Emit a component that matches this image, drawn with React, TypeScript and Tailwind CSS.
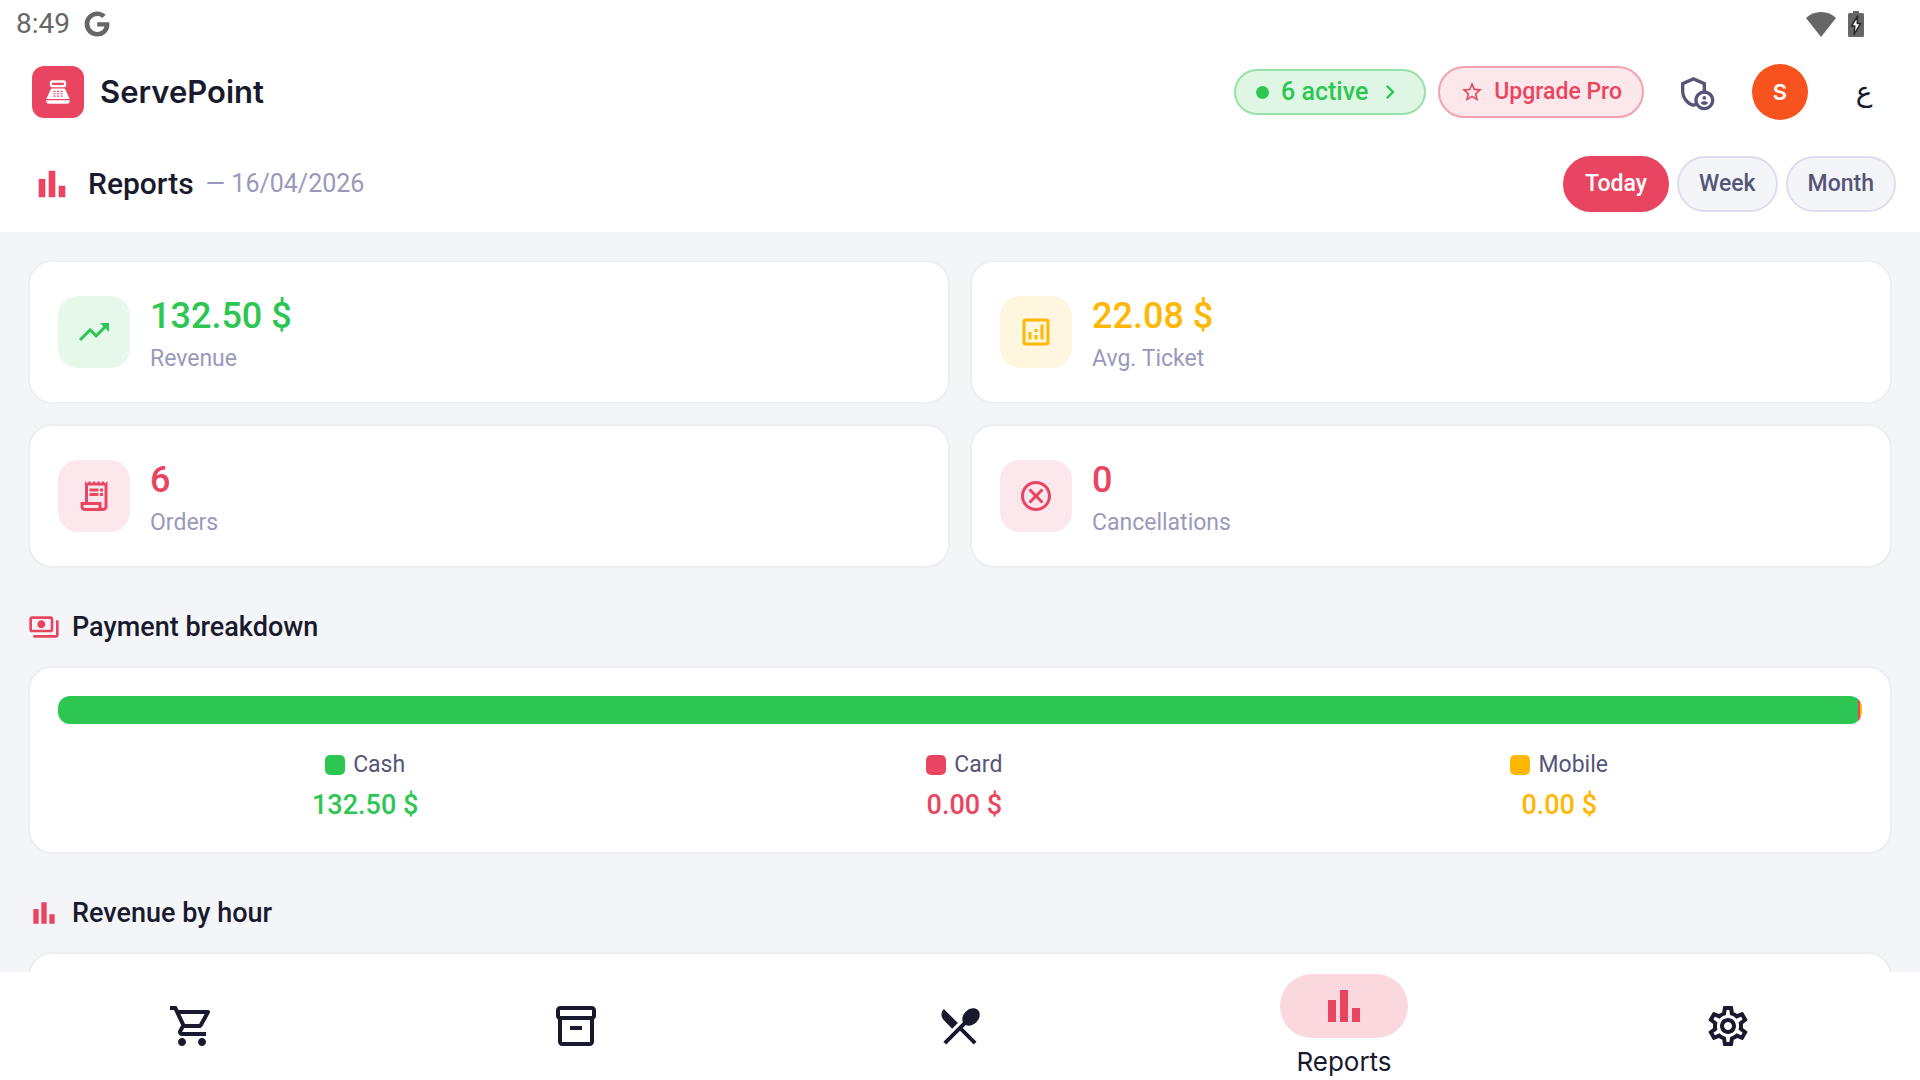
import React, { useState } from "react";
import { FaGoogle } from "react-icons/fa";
import {
  MdBarChart,
  MdChevronRight,
  MdOutlineAdminPanelSettings,
  MdOutlineAnalytics,
  MdOutlineCancel,
  MdOutlineInventory2,
  MdOutlinePayments,
  MdOutlineReceiptLong,
  MdOutlineSettings,
  MdOutlineShoppingCart,
  MdPointOfSale,
  MdRestaurantMenu,
  MdStarOutline,
  MdTrendingUp,
} from "react-icons/md";
import type { IconType } from "react-icons";
import clsx from "clsx";

const stats = [
  {
    label: "Revenue",
    value: "132.50 $",
    icon: MdTrendingUp,
    text: "text-[#2dc653]",
    tile: "bg-[#e6f8ea]",
  },
  {
    label: "Avg. Ticket",
    value: "22.08 $",
    icon: MdOutlineAnalytics,
    text: "text-[#ffb703]",
    tile: "bg-[#fff6e0]",
  },
  {
    label: "Orders",
    value: "6",
    icon: MdOutlineReceiptLong,
    text: "text-[#e94560]",
    tile: "bg-[#fce8ec]",
  },
  {
    label: "Cancellations",
    value: "0",
    icon: MdOutlineCancel,
    text: "text-[#e94560]",
    tile: "bg-[#fce8ec]",
  },
];

// an empty method still gets a sliver of the bar
const payments = [
  { label: "Cash", amount: 132.5, text: "text-[#2dc653]", bg: "bg-[#2dc653]" },
  { label: "Card", amount: 0, text: "text-[#e94560]", bg: "bg-[#e94560]" },
  { label: "Mobile", amount: 0, text: "text-[#ffb703]", bg: "bg-[#ffb703]" },
];

const periods = ["Today", "Week", "Month"];

const tabs = [
  { label: "Sales", icon: MdOutlineShoppingCart },
  { label: "Products", icon: MdOutlineInventory2 },
  { label: "Kitchen", icon: MdRestaurantMenu },
  { label: "Reports", icon: MdBarChart },
  { label: "Settings", icon: MdOutlineSettings },
];

export default function App() {
  return (
    <div className="flex h-screen flex-col bg-white font-[Roboto,sans-serif] text-[#1a1a2e]">
      <StatusBar />
      <Header />
      <ReportsBar />
      <main className="min-h-0 flex-1 overflow-hidden bg-[#f4f5f9] px-7 pt-7">
        <div className="grid grid-cols-2 gap-5">
          {stats.map((stat) => (
            <StatCard key={stat.label} {...stat} />
          ))}
        </div>
        <SectionTitle icon={MdOutlinePayments} title="Payment breakdown" />
        <PaymentCard />
        <SectionTitle icon={MdBarChart} title="Revenue by hour" />
        <Card className="h-80" />
      </main>
      <BottomNav />
    </div>
  );
}

function StatusBar() {
  return (
    <div className="flex h-12 shrink-0 items-center justify-between pr-14 pl-4 text-[#666666]">
      <div className="flex items-center gap-3.5">
        <span className="text-[28px] leading-8">8:49</span>
        <FaGoogle className="size-[26px]" />
      </div>
      <div className="flex items-center gap-3">
        <svg viewBox="0 0 30 26" className="h-[26px] w-[30px]" fill="currentColor">
          <path d="M15 26 0 7C4 3 9 1 15 1s11 2 15 6z" />
        </svg>
        <svg viewBox="0 0 16 26" className="h-[26px] w-4">
          <path
            d="M5 0h6v2h3.500q1.500 0 1.500 1.500v21q0 1.500-1.500 1.500h-13Q0 26 0 24.500v-21Q0 2 1.500 2H5z"
            fill="#666666"
          />
          <path
            d="M9.500 5 3.500 15h3.300L6 23.500 12.700 12.500H9.300z"
            fill="#ffffff"
            stroke="#2b2b2b"
            strokeWidth="1.600"
            strokeLinejoin="round"
          />
        </svg>
      </div>
    </div>
  );
}

function Header() {
  return (
    <header className="flex h-[88px] shrink-0 items-center justify-between px-8">
      <div className="flex items-center gap-4">
        <div className="flex size-[52px] items-center justify-center rounded-xl bg-[#e94560] text-white">
          <MdPointOfSale className="size-7" />
        </div>
        <h1 className="font-[Inter,sans-serif] text-[31px] leading-9 font-semibold">
          ServePoint
        </h1>
      </div>
      <div className="flex items-center">
        <button className="flex h-[46px] items-center rounded-full border-2 border-[#96e2a9] bg-[#e0f6e5] px-5 text-[#2dc653]">
          <span className="mr-3 size-[13px] rounded-full bg-[#2dc653]" />
          <span className="text-[25px] leading-8 font-medium">6 active</span>
          <MdChevronRight className="ml-2 size-7" />
        </button>
        <button className="ml-3 flex h-[52px] items-center gap-2.5 rounded-full border-2 border-[#f4a2b0] bg-[#fce7eb] px-5 text-[#e94560]">
          <MdStarOutline className="size-6" />
          <span className="text-[23px] leading-8 font-medium">Upgrade Pro</span>
        </button>
        <button
          aria-label="Admin panel"
          className="ml-8 flex size-10 items-center justify-center text-[#555577]"
        >
          <MdOutlineAdminPanelSettings className="size-10" />
        </button>
        <button className="ml-9 size-14 rounded-full bg-[#f8521f] font-[Inter,sans-serif] text-[22px] font-semibold text-white">
          S
        </button>
        <button
          lang="ar"
          className="ml-8 w-12 font-['DejaVu_Sans',sans-serif] text-[28px] leading-8"
        >
          ع
        </button>
      </div>
    </header>
  );
}

function ReportsBar() {
  const [period, setPeriod] = useState("Today");

  return (
    <div className="flex h-24 shrink-0 items-center justify-between pr-6 pl-8">
      <div className="flex items-center">
        <MdBarChart className="size-10 text-[#e94560]" />
        <h2 className="ml-4 text-[30px] leading-9 font-medium">Reports</h2>
        <span className="ml-3 text-[25px] leading-8 text-[#9999bb]">
          — 16/04/2026
        </span>
      </div>
      <div className="flex gap-2">
        {periods.map((name) => (
          <button
            key={name}
            onClick={() => setPeriod(name)}
            className={clsx(
              "h-14 rounded-full border-2 px-5 text-[23px] leading-8 font-medium",
              name === period
                ? "border-[#e94560] bg-[#e94560] text-white"
                : "border-[#dddded] bg-[#f4f5f9] text-[#555577]",
            )}
          >
            {name}
          </button>
        ))}
      </div>
    </div>
  );
}

function Card({
  className,
  children,
}: {
  className?: string;
  children?: React.ReactNode;
}) {
  return (
    <section
      className={clsx(
        "rounded-3xl border-2 border-[#edeef3] bg-white p-7",
        className,
      )}
    >
      {children}
    </section>
  );
}

function StatCard({
  label,
  value,
  icon: Icon,
  text,
  tile,
}: {
  label: string;
  value: string;
  icon: IconType;
  text: string;
  tile: string;
}) {
  return (
    <Card className="flex h-36 items-center gap-5">
      <div
        className={clsx(
          "flex size-[72px] items-center justify-center rounded-[20px]",
          tile,
          text,
        )}
      >
        <Icon className="size-9" />
      </div>
      <div>
        <p className={clsx("text-[36px] leading-[50px] font-medium", text)}>
          {value}
        </p>
        <p className="mt-1 text-[23px] leading-7 text-[#9999bb]">{label}</p>
      </div>
    </Card>
  );
}

function SectionTitle({ icon: Icon, title }: { icon: IconType; title: string }) {
  return (
    <div className="mt-10 mb-5 flex items-center gap-3">
      <Icon className="size-8 text-[#e94560]" />
      <h3 className="text-[27px] leading-[38px] font-medium">{title}</h3>
    </div>
  );
}

function PaymentCard() {
  return (
    <Card className="h-[188px]">
      <div className="flex h-7 overflow-hidden rounded-xl">
        {payments.map((p) => (
          <div
            key={p.label}
            className={clsx("min-w-[2px]", p.bg)}
            style={{ flexGrow: p.amount }}
          />
        ))}
      </div>
      <div className="mt-[25px] flex justify-around">
        {payments.map((p) => (
          <div key={p.label} className="flex flex-col items-center">
            <div className="flex items-center gap-2">
              <span className={clsx("size-5 rounded-[5px]", p.bg)} />
              <span className="text-[23px] leading-8 text-[#555577]">
                {p.label}
              </span>
            </div>
            <p className={clsx("mt-2 text-[27px] leading-8 font-medium", p.text)}>
              {p.amount.toFixed(2)} $
            </p>
          </div>
        ))}
      </div>
    </Card>
  );
}

function BottomNav() {
  const [active, setActive] = useState("Reports");

  return (
    <nav className="grid h-[108px] shrink-0 grid-cols-5">
      {tabs.map(({ label, icon: Icon }) =>
        label === active ? (
          <button
            key={label}
            aria-current="page"
            className="flex flex-col items-center pt-[2px]"
          >
            <span className="flex h-16 w-32 items-center justify-center rounded-full bg-[#fad8dd] text-[#e94560]">
              <Icon className="size-12" />
            </span>
            <span className="mt-2 font-[Inter,sans-serif] text-[26px] leading-8">
              {label}
            </span>
          </button>
        ) : (
          <button
            key={label}
            aria-label={label}
            onClick={() => setActive(label)}
            className="flex items-center justify-center"
          >
            <Icon className="size-12" />
          </button>
        ),
      )}
    </nav>
  );
}
